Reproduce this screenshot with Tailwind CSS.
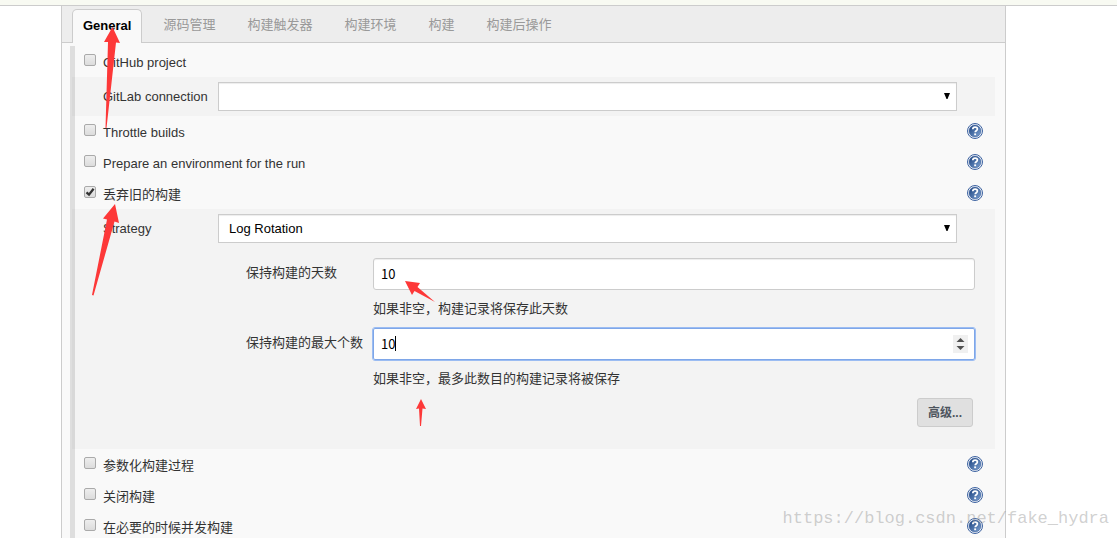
<!DOCTYPE html>
<html lang="zh-CN">
<head>
<meta charset="utf-8">
<title>General</title>
<script src="https://cdn.jsdelivr.net/npm/@tailwindcss/browser@4"></script>
</head>
<body class="relative h-screen overflow-hidden bg-white font-['Liberation_Sans','Noto_Sans_CJK_SC',sans-serif] text-[13px] leading-5 text-[#333]">
<svg class="absolute size-0">
  <defs>
    <linearGradient id="blue" x1="0" y1="0" x2="1" y2="1">
      <stop offset="0.1" stop-color="#234a86"/><stop offset="1" stop-color="#7fa3d3"/>
    </linearGradient>
  </defs>
  <symbol id="help" viewBox="0 0 16 16">
    <circle cx="8" cy="8" r="7.5" fill="#fff" stroke="#3c62a0" stroke-width="1"/>
    <circle cx="8" cy="8" r="6" fill="url(#blue)" stroke="#2f5594" stroke-width=".5"/>
    <path d="M5.8 6.3C5.8 4.9 6.8 4.1 8.1 4.1s2.3.8 2.3 2c0 1.600-2.200 1.700-2.200 3.200" fill="none" stroke="#fff" stroke-width="1.700"/>
    <rect x="7.200" y="10.400" width="1.900" height="1.800" fill="#fff"/>
  </symbol>
</svg>

<div class="h-[6px] border-b border-[#ccc] bg-[#f8faf2]"></div>
<main class="mr-[111px] ml-[61px] min-h-full border-x border-[#ccc] bg-[#f9f9f9]">
  <nav class="flex h-[37px] items-end gap-[10px] border-b border-[#ccc] bg-[#ededed] pl-[10px] text-[#999]">
    <a href="#general" class="-mb-px h-[34px] rounded-t-[5px] border border-b-0 border-[#ccc] bg-[#f9f9f9] px-[10px] pt-[6px] font-bold text-black">General</a>
    <a href="#scm" class="h-[33px] px-[11px] pt-[6px]">源码管理</a>
    <a href="#triggers" class="h-[33px] px-[11px] pt-[6px]">构建触发器</a>
    <a href="#env" class="h-[33px] px-[11px] pt-[6px]">构建环境</a>
    <a href="#build" class="h-[33px] px-[11px] pt-[6px]">构建</a>
    <a href="#post" class="h-[33px] px-[11px] pt-[6px]">构建后操作</a>
  </nav>

  <form class="mt-[3px] mr-[10px] ml-[8px] border-l-[5px] border-[#dedede]">
    <div class="flex h-[31px] items-start pt-[7px] pr-3 pl-[9px]">
      <input id="github" type="checkbox" class="mt-px size-[12px] appearance-none rounded-[2px] border border-[#aaa] bg-linear-to-b from-[#eee] to-[#dcdcdc]">
      <label for="github" class="ml-[7px] flex-1">GitHub project</label>
    </div>

    <div class="-ml-[3px] flex bg-black/[0.025] py-[5px] pr-[38px] pl-[31px]">
      <label for="gitlab" class="w-[115px] pt-[5px]">GitLab connection</label>
      <div class="grid flex-1">
        <select id="gitlab" class="col-start-1 row-start-1 h-[29px] w-full appearance-none border border-[#ccc] bg-white px-[10px] text-black shadow-[inset_0_1px_1px_rgba(0,0,0,0.075)]"><option></option></select>
        <svg class="pointer-events-none col-start-1 row-start-1 mt-[11px] mr-[7px] h-[6px] w-[6px] justify-self-end" viewBox="0 0 6 6"><path d="M0 0h6L3.500 6h-1z"/></svg>
      </div>
    </div>

    <div class="flex h-[31px] items-start pt-[7px] pr-3 pl-[9px]">
      <input id="throttle" type="checkbox" class="mt-px size-[12px] appearance-none rounded-[2px] border border-[#aaa] bg-linear-to-b from-[#eee] to-[#dcdcdc]">
      <label for="throttle" class="ml-[7px] flex-1">Throttle builds</label>
      <button type="button" aria-label="Help" class="size-4"><svg class="size-4"><use href="#help"/></svg></button>
    </div>
    <div class="flex h-[31px] items-start pt-[7px] pr-3 pl-[9px]">
      <input id="prepare" type="checkbox" class="mt-px size-[12px] appearance-none rounded-[2px] border border-[#aaa] bg-linear-to-b from-[#eee] to-[#dcdcdc]">
      <label for="prepare" class="ml-[7px] flex-1">Prepare an environment for the run</label>
      <button type="button" aria-label="Help" class="size-4"><svg class="size-4"><use href="#help"/></svg></button>
    </div>
    <div class="flex h-[31px] items-start pt-[7px] pr-3 pl-[9px]">
      <span class="mt-px grid size-[12px]">
        <input id="discard" type="checkbox" checked class="col-start-1 row-start-1 size-[12px] appearance-none rounded-[2px] border border-[#aaa] bg-linear-to-b from-[#eee] to-[#dcdcdc]">
        <svg class="pointer-events-none col-start-1 row-start-1 size-[12px]" viewBox="0 0 12 12"><path d="M2.500 6.400 5 8.600 9.600 2.800" fill="none" stroke="#333" stroke-width="2.300"/></svg>
      </span>
      <label for="discard" class="ml-[7px] flex-1">丢弃旧的构建</label>
      <button type="button" aria-label="Help" class="size-4"><svg class="size-4"><use href="#help"/></svg></button>
    </div>

    <div class="-ml-[3px] bg-black/[0.025] pt-[5px] pb-[22px]">
      <div class="flex pr-[38px] pl-[31px]">
        <label for="strategy" class="w-[115px] pt-[5px]">Strategy</label>
        <div class="grid flex-1">
          <select id="strategy" class="col-start-1 row-start-1 h-[29px] w-full appearance-none border border-[#ccc] bg-white px-[10px] pt-px text-black shadow-[inset_0_1px_1px_rgba(0,0,0,0.075)]"><option>Log Rotation</option></select>
          <svg class="pointer-events-none col-start-1 row-start-1 mt-[11px] mr-[7px] h-[6px] w-[6px] justify-self-end" viewBox="0 0 6 6"><path d="M0 0h6L3.500 6h-1z"/></svg>
        </div>
      </div>

      <div class="mt-[15px] grid grid-cols-[127px_1fr] pr-5 pl-[174px]">
        <label for="days" class="pt-[5px]">保持构建的天数</label>
        <div>
          <input id="days" type="text" value="10" class="block h-8 w-full rounded-[3px] border border-[#ccc] bg-white px-[7px] pb-[2px] font-['Noto_Sans_CJK_SC',sans-serif] text-black shadow-[inset_0_1px_1px_rgba(0,0,0,0.075)]">
          <p class="mt-[9px] mb-[9px]">如果非空，构建记录将保存此天数</p>
        </div>
        <label for="max" class="pt-[5px]">保持构建的最大个数</label>
        <div>
          <div class="relative">
            <input id="max" type="text" inputmode="numeric" value="10" class="block h-8 w-full rounded-[2px] border border-[#7ea6e8] bg-white px-[7px] pb-[2px] font-['Noto_Sans_CJK_SC',sans-serif] text-black outline outline-[#9bbcf2]">
            <span class="absolute top-2 left-[22px] h-[15px] w-px bg-black"></span>
            <span class="absolute top-[7px] right-[7px] h-[18px] w-[15px] bg-[#f0f0f0]"><svg class="h-[18px] w-[15px]" viewBox="0 0 15 18"><path d="M3.500 7 7.500 3 11.500 7zM3.500 11h8l-4 4z" fill="#505050"/></svg></span>
          </div>
          <p class="mt-[9px] mb-[9px]">如果非空，最多此数目的构建记录将被保存</p>
        </div>
      </div>
      <div class="flex justify-end pr-[22px]">
        <button type="button" class="h-[29px] w-14 rounded-[3px] border border-[#ccc] bg-[#e0e0e0] text-[12px] font-bold text-[#4d545d]">高级...</button>
      </div>
    </div>

    <div class="flex h-[31px] items-start pt-[7px] pr-3 pl-[9px]">
      <input id="params" type="checkbox" class="mt-px size-[12px] appearance-none rounded-[2px] border border-[#aaa] bg-linear-to-b from-[#eee] to-[#dcdcdc]">
      <label for="params" class="ml-[7px] flex-1">参数化构建过程</label>
      <button type="button" aria-label="Help" class="size-4"><svg class="size-4"><use href="#help"/></svg></button>
    </div>
    <div class="flex h-[31px] items-start pt-[7px] pr-3 pl-[9px]">
      <input id="disable" type="checkbox" class="mt-px size-[12px] appearance-none rounded-[2px] border border-[#aaa] bg-linear-to-b from-[#eee] to-[#dcdcdc]">
      <label for="disable" class="ml-[7px] flex-1">关闭构建</label>
      <button type="button" aria-label="Help" class="size-4"><svg class="size-4"><use href="#help"/></svg></button>
    </div>
    <div class="flex h-[31px] items-start pt-[7px] pr-3 pl-[9px]">
      <input id="concurrent" type="checkbox" class="mt-px size-[12px] appearance-none rounded-[2px] border border-[#aaa] bg-linear-to-b from-[#eee] to-[#dcdcdc]">
      <label for="concurrent" class="ml-[7px] flex-1">在必要的时候并发构建</label>
      <button type="button" aria-label="Help" class="size-4"><svg class="size-4"><use href="#help"/></svg></button>
    </div>
  </form>
</main>

<!-- Red pointer arrows laid over the form -->
<svg class="pointer-events-none absolute top-0 left-0 h-[538px] w-[1117px]" viewBox="0 0 1117 538" fill="#fd3838">
  <path d="M112.500 27 120 43 116 42.500 106.500 128H105.500L108 42 104 42z"/>
  <path d="M115 204 119 223 114.500 221.500 93.500 295.500 92 295 107 219.500 103 218.500z"/>
  <path d="M405 281 420 283 417.500 287 435 302 414.500 291 412 295z"/>
  <path d="M421 399 426 409 422.500 408.500 421 426H420L419 408.500 416 409z"/>
</svg>
<div class="pointer-events-none absolute right-[8px] bottom-[9px] font-['Liberation_Mono',monospace] text-[17px] text-[#888]/40">https://blog.csdn.net/fake_hydra</div>
</body>
</html>
